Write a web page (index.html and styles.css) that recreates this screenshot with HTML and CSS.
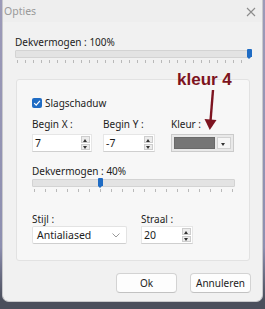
FILE: index.html
```html
<html>
  <head>
    <link rel="stylesheet" href="styles.css">
    <title>Opties</title>
  </head>
  <body>
    <div class="dialog">
      <div class="titlebar">
        <span class="title">Opties</span>
        <svg class="close" width="10" height="10" viewBox="0 0 10 10">
          <path d="M1 1 L9 9 M9 1 L1 9" stroke="#8c8c8c" stroke-width="1.1" fill="none"/>
        </svg>
      </div>

      <div class="content">
        <div class="label first">Dekvermogen : 100%</div>
        <div class="slider wide">
          <div class="track"></div>
          <div class="thumb" style="left:232px"></div>
          <div class="ticks"></div>
        </div>

        <div class="group">
          <label class="check">
            <span class="box">
              <svg width="10" height="10" viewBox="0 0 10 10">
                <path d="M2.2 5.2 L4.2 7.2 L7.9 2.9" stroke="#fff" stroke-width="1.2" fill="none"/>
              </svg>
            </span>
            Slagschaduw
          </label>

          <div class="fields">
            <div class="field fx">
              <div class="label">Begin X :</div>
              <div class="spin">
                <span class="value">7</span>
                <span class="arrows"><span class="up"></span><span class="down"></span></span>
              </div>
            </div>
            <div class="field fy">
              <div class="label">Begin Y :</div>
              <div class="spin">
                <span class="value">-7</span>
                <span class="arrows"><span class="up"></span><span class="down"></span></span>
              </div>
            </div>
            <div class="field fk">
              <div class="label">Kleur :</div>
              <div class="color">
                <span class="swatch"></span>
                <span class="drop"></span>
              </div>
            </div>
          </div>

          <div class="label op">Dekvermogen : 40%</div>
          <div class="slider narrow">
            <div class="track"></div>
            <div class="thumb" style="left:66px"></div>
            <div class="ticks"></div>
          </div>

          <div class="fields last">
            <div class="field fs">
              <div class="label">Stijl :</div>
              <div class="select">
                <span class="value">Antialiased</span>
                <svg width="8" height="5" viewBox="0 0 8 5">
                  <path d="M0.5 0.5 L4 4 L7.5 0.5" stroke="#9a9a9a" stroke-width="1" fill="none"/>
                </svg>
              </div>
            </div>
            <div class="field fr">
              <div class="label">Straal :</div>
              <div class="spin">
                <span class="value">20</span>
                <span class="arrows"><span class="up"></span><span class="down"></span></span>
              </div>
            </div>
          </div>
        </div>

        <div class="buttons">
          <button class="btn ok">Ok</button>
          <button class="btn">Annuleren</button>
        </div>
      </div>

      <div class="note">
        <div class="note-text">kleur 4</div>
        <svg class="arrow" width="20" height="46" viewBox="0 0 20 46">
          <path d="M12 2 L9.5 33" stroke="#7d1420" stroke-width="2.4" fill="none"/>
          <path d="M3.5 31 L15.5 32 L8.8 42 Z" fill="#7d1420"/>
        </svg>
      </div>
    </div>
  </body>
</html>
```

FILE: styles.css
```css
body {margin:0; width:265px; height:309px; overflow:hidden;
      background:linear-gradient(180deg, #9c9ab8 0%, #8d8fb0 80%, #4b4f5c 97%);
      font-family:"Noto Sans", "Open Sans", sans-serif; font-size:10px; color:#1c1c1c;}

.dialog {position:relative; width:261px; height:302px; margin-left:2px; box-sizing:border-box;
         background:#f1f1f1; border:1px solid #c9c9cc; border-top:0; border-radius:0 0 7px 7px;}

.titlebar {height:22px; display:flex; align-items:center; justify-content:space-between;
           padding:0 6px 0 1px; background:#eeeeee;}
.title {color:#9a9a9a; font-size:10.5px;}
.close {margin-top:1px;}

.content {padding:0 11px 0 12px;}
.label {line-height:14px; white-space:nowrap;}
.label.first {margin-top:13px;}

/* sliders */
.slider {position:relative; height:15px;}
.slider .track {position:absolute; left:0; right:0; top:1px; height:6px;
                background:#e3e3e3; border:1px solid #d3d3d3; border-radius:1px;}
.slider .thumb {position:absolute; top:0; width:5px; height:8px; background:#1f6cc4;
                border-radius:1px 1px 0 0;}
.slider .thumb:after {content:""; position:absolute; left:0; top:8px;
                      border-left:2.5px solid transparent; border-right:2.5px solid transparent;
                      border-top:2px solid #1f6cc4;}
.slider .ticks {position:absolute; left:2px; right:2px; top:11px; height:3px;
                background:repeating-linear-gradient(90deg, #b9b9b9 0, #b9b9b9 1px, transparent 1px, transparent 8px);}
.slider.narrow .ticks {background:repeating-linear-gradient(90deg, #b9b9b9 0, #b9b9b9 1px, transparent 1px, transparent 11px);}

/* group box */
.group {margin:15px 0 0 1px; width:234px; height:182px; box-sizing:border-box;
        padding:16px 14px 0 15px; background:#f7f7f7; border:1px solid #e2e2e2; border-radius:3px;}

.check {display:flex; align-items:center; gap:3px; line-height:14px;}
.box {display:flex; width:10px; height:10px; background:#1f6cc4; border-radius:2px;}

.fields {display:flex; margin-top:7px;}
.field .label {margin-bottom:3px;}
.fx {width:60px;}
.fy {width:52px; margin-left:11px;}
.fk {width:63px; margin-left:16px;}

.spin {display:flex; height:18px; box-sizing:border-box; background:#fff;
       border:1px solid #e6e6e6; border-bottom-color:#cfcfcf; padding-left:2px;}
.spin .value {flex:1; line-height:16px; font-size:10.5px;}
.arrows {display:flex; flex-direction:column; width:9px; margin:1px 1px 1px 0; gap:1px;}
.arrows span {flex:1; position:relative; background:#ececec; border:1px solid #cdcdcd;}
.arrows .up:after, .arrows .down:after {content:""; position:absolute; left:1px; top:2px;
       border-left:2.5px solid transparent; border-right:2.5px solid transparent;}
.arrows .up:after {border-bottom:3px solid #333;}
.arrows .down:after {border-top:3px solid #333; top:1px;}

.color {display:flex; height:18px; box-sizing:border-box; padding:2px; gap:2px;
        background:#e9e9e9; border:1px solid #cbcbcb;}
.swatch {flex:1; background:#767676; border:1px solid #6a6a6a;}
.drop {width:12px; position:relative; background:#f6f6f6; border:1px solid #d2d2d2;}
.drop:after {content:""; position:absolute; left:3px; top:5px;
             border-left:2.5px solid transparent; border-right:2.5px solid transparent; border-top:3px solid #333;}

.label.op {margin-top:12px;}

.fields.last {margin-top:19px;}
.fields.last .field .label {margin-bottom:0;}
.fs {width:95px;}
.fr {width:52px; margin-left:14px;}
.select {display:flex; align-items:center; justify-content:space-between; height:18px; box-sizing:border-box;
         padding:0 6px 0 4px; background:#fff; border:1px solid #e3e3e3; border-bottom-color:#cfcfcf; border-radius:2px;}
.select .value {line-height:16px; font-size:10.5px;}

/* buttons */
.buttons {display:flex; justify-content:flex-end; gap:13px; margin-top:12px; padding-right:0;}
.btn {width:61px; height:20px; padding:0; font-family:inherit; font-size:10px; color:#1c1c1c;
      background:#fdfdfd; border:1px solid #d3d3d3; border-bottom-color:#c2c2c2; border-radius:4px;}

/* annotation painted over the dialog */
.note {position:absolute; left:174px; top:70px;}
.note-text {font-family:"Liberation Sans", Arial, sans-serif; font-weight:bold; font-size:17px;
            color:#7d1420; line-height:20px;}
.arrow {position:absolute; left:24px; top:18px;}
```
